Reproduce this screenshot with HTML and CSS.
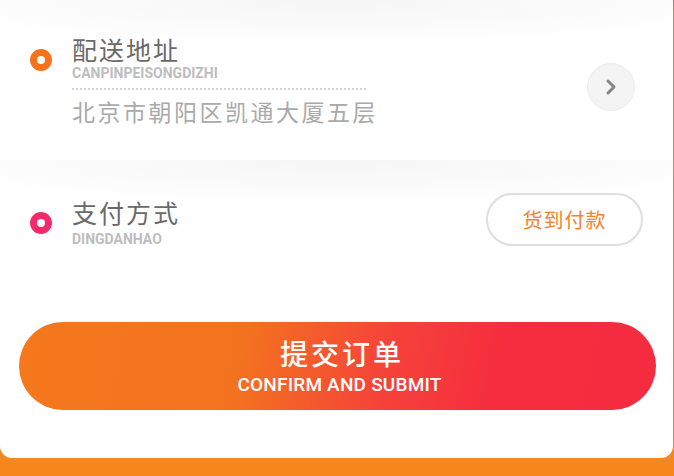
FILE: index.html
```html
<!DOCTYPE html>
<html lang="zh">
<head>
<meta charset="utf-8">
<link rel="stylesheet" href="styles.css">
</head>
<body>
<div class="card">
  <section class="section section-address">
    <div class="info">
      <div class="head">
        <span class="dot dot-orange"></span>
        <div class="titles">
          <div class="title">配送地址</div>
          <div class="sub">CANPINPEISONGDIZHI</div>
        </div>
      </div>
      <div class="dotted"></div>
      <div class="address">北京市朝阳区凯通大厦五层</div>
    </div>
    <button class="chev" type="button" aria-label="more">
      <svg width="14" height="18" viewBox="0 0 14 18"><path d="M4 3 L10 9 L4 15" fill="none" stroke="#858585" stroke-width="3" stroke-linecap="round" stroke-linejoin="round"/></svg>
    </button>
  </section>
  <section class="section section-pay">
    <div class="info">
      <div class="head">
        <span class="dot dot-pink"></span>
        <div class="titles">
          <div class="title">支付方式</div>
          <div class="sub">DINGDANHAO</div>
        </div>
      </div>
    </div>
    <button class="pill" type="button">货到付款</button>
  </section>
  <div class="submit-wrap">
    <button class="submit" type="button">
      <span class="submit-cn">提交订单</span>
      <span class="submit-en">CONFIRM AND SUBMIT</span>
    </button>
  </div>
</div>
</body>
</html>
```

FILE: styles.css
```css
* { box-sizing: border-box; }
html, body { margin: 0; padding: 0; }
body {
  width: 674px;
  height: 476px;
  overflow: hidden;
  background: linear-gradient(180deg, #e0701e 0, #f4851c 12px, #f5871c 100%);
  font-family: "Noto Sans CJK SC", "Noto Sans", sans-serif;
}
.card {
  width: 673px;
  height: 458px;
  flex: none;
  background: #fff;
  border-radius: 0 0 12px 12px;
  display: flex;
  flex-direction: column;
}
.section {
  display: flex;
  flex: none;
  background: radial-gradient(70% 48px at 50% 0, #f6f6f6 0%, #fafafa 45%, #fff 100%);
}
.section-address {
  height: 160px;
  padding: 35px 38px 0 72px;
  align-items: flex-start;
}
.section-pay {
  height: 130px;
  padding: 38px 30px 0 72px;
  align-items: flex-start;
}
.info { flex: 1; }
.head {
  display: flex;
  align-items: center;
  margin-left: -42px;
}
.dot {
  width: 22px;
  height: 22px;
  border-radius: 50%;
  margin-right: 20px;
  margin-top: 4px;
  flex: none;
  background: #fff;
}
.dot-orange { border: 7px solid #f5731c; }
.dot-pink { border: 7px solid #f52a6c; }
.title {
  font-size: 25px;
  line-height: 28px;
  color: #696969;
  letter-spacing: 2px;
}
.sub {
  font-family: Roboto, "Liberation Sans", sans-serif;
  font-weight: 700;
  font-size: 14px;
  line-height: 14px;
  color: #bdbdbd;
  margin-top: 3px;
}
.section-pay .sub { margin-top: 6px; }
.section-pay .dot { margin-top: 2px; }
.dotted {
  width: 294px;
  height: 0;
  border-top: 2px dotted #d4d4d4;
  margin-top: 8px;
}
.address {
  margin-top: 6px;
  font-size: 23px;
  line-height: 30px;
  color: #aaaaaa;
  letter-spacing: 2.5px;
}
.chev {
  width: 48px;
  height: 48px;
  border-radius: 50%;
  background: #f4f4f4;
  border: 1px solid #ececec;
  margin-top: 28px;
  padding: 0;
  display: flex;
  align-items: center;
  justify-content: center;
}
.pill {
  width: 157px;
  height: 53px;
  margin-top: -5px;
  border: 2px solid #dedede;
  border-radius: 27px;
  background: #fff;
  color: #f5822a;
  font-family: "Noto Sans CJK SC", sans-serif;
  font-size: 20px;
  letter-spacing: 1px;
  padding: 0;
}
.submit-wrap {
  padding: 32px 17px 0 19px;
}
.submit {
  width: 637px;
  height: 88px;
  border: none;
  border-radius: 44px;
  background: linear-gradient(100deg, #f4781c 0%, #f3721f 35%, #f5423a 58%, #f62d3e 75%, #f52b40 100%);
  color: #fff;
  display: flex;
  flex-direction: column;
  align-items: center;
  justify-content: center;
  padding: 0;
}
.submit-cn {
  font-family: "Noto Sans CJK SC", sans-serif;
  font-size: 28px;
  line-height: 34px;
  font-weight: 500;
  letter-spacing: 3px;
  padding-left: 9px;
}
.submit-en {
  font-family: Roboto, "Liberation Sans", sans-serif;
  font-weight: 500;
  font-size: 19px;
  line-height: 22px;
  margin-top: 4px;
  letter-spacing: 0.2px;
  padding-left: 4px;
}
```
